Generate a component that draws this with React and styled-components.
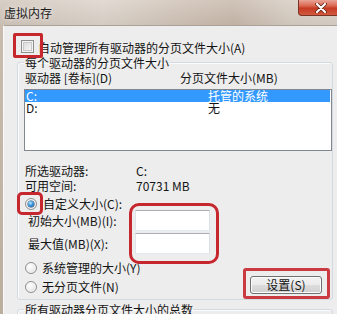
import React from 'react';
import styled, { createGlobalStyle } from 'styled-components';

const FONT = `"Noto Sans CJK SC", "Noto Sans", sans-serif`;

const Global = createGlobalStyle`
  html, body { margin: 0; padding: 0; background: #ececec; }
  #root { width: 337px; height: 314px; overflow: hidden; }
`;

const Window = styled.div`
  width: 344px;
  height: 314px;
  display: flex;
  flex-direction: column;
  font-family: ${FONT};
  font-size: 12px;
  color: #141414;
`;

const TitleBar = styled.div`
  height: 25px;
  flex: none;
  display: flex;
  align-items: flex-start;
  justify-content: space-between;
  background:
    linear-gradient(180deg, rgba(255,255,255,0.18), rgba(0,0,0,0.03)),
    linear-gradient(90deg, #cfc4b9 0%, #dbd2c9 30%, #cdbfb2 55%, #c6b7a9 68%, #d6ccc2 85%, #d9cfc6 100%);
`;

const Title = styled.div`
  padding: 5px 0 0 4px;
  line-height: 15px;
  font-size: 12px;
  color: #1b1b1b;
  text-shadow: 0 0 5px rgba(255, 255, 255, 0.9);
`;

const CloseButton = styled.div`
  width: 46px;
  height: 16px;
  box-sizing: border-box;
  border: 1px solid #7a3326;
  border-top: none;
  border-radius: 0 0 4px 4px;
  background: linear-gradient(180deg, #e9a497 0%, #d9664f 40%, #c63a22 55%, #d05a3f 100%);
  display: flex;
  align-items: center;
  justify-content: center;
`;

const Body = styled.div`
  flex: 1;
  display: flex;
  min-height: 0;
`;

const LeftFrame = styled.div`
  width: 3px;
  flex: none;
  background: linear-gradient(180deg, #c9bcae, #bcae9f);
`;

const Client = styled.div`
  flex: 1;
  display: flex;
  flex-direction: column;
  background: #ededed;
  border-left: 1px solid #fafafa;
  border-top: 1px solid #aaa198;
`;

const AutoRow = styled.label`
  display: flex;
  align-items: flex-start;
  gap: 4px;
  margin: 14px 0 0 17px;
  height: 15px;
  line-height: 15px;
`;

const Anchor = styled.span`
  position: relative;
  flex: none;
  display: inline-block;
`;

const Highlight = styled.span`
  position: absolute;
  top: ${p => p.$t}px;
  right: ${p => p.$r}px;
  bottom: ${p => p.$b}px;
  left: ${p => p.$l}px;
  border: 3px solid #c6262d;
  border-radius: ${p => p.$radius}px;
  pointer-events: none;
  opacity: ${p => p.$fade ? 0.9 : 1};
`;

const CheckBox = styled.span`
  display: block;
  width: 13px;
  height: 13px;
  box-sizing: border-box;
  border: 1px solid #8e8f8f;
  background: linear-gradient(135deg, #d6d6d6, #fbfbfb);
  box-shadow: inset 0 0 0 1px #f4f4f4, inset 0 0 0 2px #c9c9c9;
`;

const Group = styled.fieldset`
  margin: 0 0 0 13px;
  width: 316px;
  box-sizing: border-box;
  padding: 0 0 5px 6px;
  border: 1px solid #d3dbe0;
  border-radius: 3px;
  box-shadow: inset 1px 1px 0 #fbfbfb;
  min-width: 0;
`;

const GroupLegend = styled.legend`
  padding: 0 1px;
  line-height: 15px;
  height: 15px;
`;

const ColumnHeader = styled.div`
  display: grid;
  grid-template-columns: 155px 1fr;
  height: 16px;
  line-height: 16px;
  padding-left: 1px;
`;

const ListBox = styled.div`
  margin-top: 3px;
  height: 62px;
  box-sizing: border-box;
  border: 1px solid #828790;
  background: #ffffff;
  padding: 0 1px 0 0;
`;

const ListRow = styled.div`
  display: grid;
  grid-template-columns: 182px 1fr;
  height: 12px;
  line-height: 12px;
  padding-left: 1px;
  background: ${p => (p.$selected ? '#3399ff' : 'transparent')};
  color: ${p => (p.$selected ? '#ffffff' : '#141414')};
`;

const InfoGrid = styled.div`
  margin-top: 12px;
  display: grid;
  grid-template-columns: 111px 1fr;
  grid-auto-rows: 15px;
  line-height: 15px;
  padding-left: 1px;
`;

const RadioRow = styled.label`
  display: flex;
  align-items: center;
  gap: ${p => p.$gap}px;
  height: ${p => p.$h}px;
  line-height: ${p => p.$h}px;
  padding-left: 1px;
  margin-top: ${p => p.$mt || 0}px;
`;

const Radio = styled.span`
  position: relative;
  display: block;
  width: 12px;
  height: 12px;
  box-sizing: border-box;
  border-radius: 50%;
  border: 1px solid #8e8f8f;
  background: radial-gradient(circle at 40% 35%, #ffffff 0%, #ececec 55%, #cfcfcf 100%);
  box-shadow: inset 0 0 0 1px #f6f6f6;

  &::after {
    content: '';
    display: ${p => (p.$checked ? 'block' : 'none')};
    position: absolute;
    left: 2px;
    top: 2px;
    width: 6px;
    height: 6px;
    border-radius: 50%;
    background: radial-gradient(circle at 40% 35%, #bfeaff 0%, #3a95e0 45%, #0e4a8c 100%);
    box-shadow: 0 0 0 0.5px #16406e;
  }
`;

const SizeGrid = styled.div`
  display: grid;
  grid-template-columns: 107px 75px;
  grid-template-rows: 22px 22px;
  row-gap: 1px;
  padding-left: 4px;
`;

const SizeLabel = styled.div`
  line-height: 22px;
  grid-column: 1;
  grid-row: ${p => p.$row};
`;

const InputStack = styled.div`
  position: relative;
  grid-column: 2;
  grid-row: 1 / span 2;
  display: flex;
  flex-direction: column;
  gap: 2px;
`;

const TextInput = styled.input`
  width: 75px;
  height: 21px;
  box-sizing: border-box;
  margin: 0;
  padding: 0 2px;
  border: 1px solid;
  border-color: #abadb3 #dbdfe6 #e3e9ef #e2e3ea;
  background: #ffffff;
  outline: none;
  font-family: ${FONT};
  font-size: 12px;
`;

const BottomRow = styled.div`
  margin-top: 5px;
  display: flex;
  justify-content: space-between;
  align-items: flex-end;
`;

const RadioColumn = styled.div`
  display: flex;
  flex-direction: column;
  gap: 4px;
`;

const PushButton = styled.button`
  position: relative;
  width: 72px;
  height: 18px;
  margin: 0 10px 0 0;
  padding: 0;
  box-sizing: border-box;
  border: 1px solid #707070;
  border-radius: 3px;
  background: linear-gradient(180deg, #f2f2f2 0%, #ebebeb 50%, #dddddd 51%, #cfcfcf 100%);
  box-shadow: inset 0 0 0 1px #fbfbfb;
  font-family: ${FONT};
  font-size: 12px;
  line-height: 16px;
  color: #141414;
`;

const SecondGroup = styled(Group)`
  margin-top: 2px;
  flex: 1;
`;

const CloseGlyph = () => (
  <svg width="12" height="10" viewBox="0 0 12 10">
    <path d="M2 1 L10 9 M10 1 L2 9" stroke="#5a1a10" strokeWidth="3.6" strokeLinecap="round" />
    <path d="M2 1 L10 9 M10 1 L2 9" stroke="#ffffff" strokeWidth="2.2" strokeLinecap="round" />
  </svg>
);

export default function App() {
  return (
    <>
      <Global />
      <Window>
        <TitleBar>
          <Title>虚拟内存</Title>
          <CloseButton>
            <CloseGlyph />
          </CloseButton>
        </TitleBar>
        <Body>
          <LeftFrame />
          <Client>
            <AutoRow>
              <Anchor>
                <CheckBox />
                <Highlight $t={-7} $r={-9} $b={-5} $l={-8} $radius={2} />
              </Anchor>
              <span>自动管理所有驱动器的分页文件大小(A)</span>
            </AutoRow>

            <Group>
              <GroupLegend>每个驱动器的分页文件大小</GroupLegend>
              <ColumnHeader>
                <span>驱动器 [卷标](D)</span>
                <span>分页文件大小(MB)</span>
              </ColumnHeader>
              <ListBox>
                <ListRow $selected>
                  <span>C:</span>
                  <span>托管的系统</span>
                </ListRow>
                <ListRow>
                  <span>D:</span>
                  <span>无</span>
                </ListRow>
              </ListBox>

              <InfoGrid>
                <span>所选驱动器:</span>
                <span>C:</span>
                <span>可用空间:</span>
                <span>70731 MB</span>
              </InfoGrid>

              <RadioRow $gap={6} $h={12} $mt={5}>
                <Anchor>
                  <Radio $checked />
                  <Highlight $t={-6} $r={-6} $b={-5} $l={-8} $radius={5} />
                </Anchor>
                <span>自定义大小(C):</span>
              </RadioRow>

              <SizeGrid>
                <SizeLabel $row={1}>初始大小(MB)(I):</SizeLabel>
                <SizeLabel $row={2}>最大值(MB)(X):</SizeLabel>
                <InputStack>
                  <TextInput defaultValue="" />
                  <TextInput defaultValue="" />
                  <Highlight $t={-7} $r={-9} $b={-9} $l={-6} $radius={10} />
                </InputStack>
              </SizeGrid>

              <BottomRow>
                <RadioColumn>
                  <RadioRow $gap={5} $h={15}>
                    <Radio />
                    <span>系统管理的大小(Y)</span>
                  </RadioRow>
                  <RadioRow $gap={5} $h={15}>
                    <Radio />
                    <span>无分页文件(N)</span>
                  </RadioRow>
                </RadioColumn>
                <PushButton type="button">
                  设置(S)
                  <Highlight $t={-9} $r={-9} $b={-6} $l={-8} $radius={3} $fade />
                </PushButton>
              </BottomRow>
            </Group>

            <SecondGroup>
              <GroupLegend>所有驱动器分页文件大小的总数</GroupLegend>
            </SecondGroup>
          </Client>
        </Body>
      </Window>
    </>
  );
}
